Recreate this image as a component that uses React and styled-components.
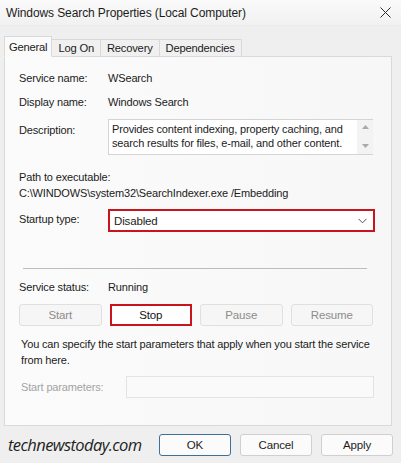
import React from 'react'
import styled, { createGlobalStyle } from 'styled-components'

const GlobalStyle = createGlobalStyle`
  html, body {
    margin: 0;
    padding: 0;
    background: #f0f0f0;
  }
  * { box-sizing: border-box; }
`

const Window = styled.div`
  width: 401px;
  height: 463px;
  background: #efefef;
  display: flex;
  flex-direction: column;
  font-family: "Liberation Sans", Arial, sans-serif;
  font-size: 11px;
  letter-spacing: -0.15px;
  color: #1b1b1b;
  overflow: hidden;
`

const TitleBar = styled.div`
  height: 26px;
  display: flex;
  align-items: center;
  justify-content: space-between;
  padding: 0 10px 0 6px;
  background: linear-gradient(#fafafa, #f1f1f1);
  border-bottom: 1px solid #ececec;
`

const Title = styled.span`
  font-size: 12px;
  letter-spacing: -0.1px;
  color: #1c1c1c;
`

const Body = styled.div`
  padding: 10px 9px 0 4px;
`

const TabRow = styled.div`
  display: flex;
  align-items: flex-end;
  height: 20px;
`

const TabItem = styled.div`
  height: ${p => (p.$active ? '21px' : '18px')};
  padding: 0 ${p => (p.$active ? 4 : 6)}px;
  display: flex;
  align-items: center;
  font-size: 11.2px;
  letter-spacing: -0.2px;
  background: ${p => (p.$active ? '#fafafa' : '#f0f0f0')};
  border: 1px solid #d9d9d9;
  border-bottom: ${p => (p.$active ? '1px solid #fafafa' : '1px solid #d9d9d9')};
  margin-right: -1px;
  margin-bottom: -1px;
  position: relative;
  z-index: ${p => (p.$active ? 2 : 1)};
`

const Panel = styled.div`
  height: 370px;
  border: 1px solid #d9d9d9;
  background: linear-gradient(90deg, #fbfbfb, #f7f7f7);
  padding: 14px 16px 0 14px;
  display: flex;
  flex-direction: column;
`

const InfoRow = styled.div`
  display: grid;
  grid-template-columns: 89px 1fr;
  align-items: ${p => (p.$top ? 'start' : 'center')};
  min-height: 14px;
  margin-top: ${p => p.$mt || 0}px;
  margin-bottom: ${p => p.$mb || 0}px;
`

const Label = styled.span`
  color: ${p => (p.$disabled ? '#a3a3a3' : '#1b1b1b')};
  padding-top: ${p => p.$pt || 0}px;
`

const DescBox = styled.div`
  height: 36px;
  margin-right: 2px;
  border: 1px solid #d4d4d4;
  border-right: none;
  background: #fff;
  display: flex;
  justify-content: space-between;
  padding: 2px 0 0 3px;
  line-height: 14px;
`

const ScrollCol = styled.div`
  width: 16px;
  background: #f3f3f3;
  display: flex;
  flex-direction: column;
  justify-content: space-between;
  align-items: center;
  padding: 5px 0 6px;
  margin-top: -2px;
`

const PathBlock = styled.div`
  margin-top: 14px;
  line-height: 16px;
`

const Select = styled.div`
  height: 23px;
  border: 2px solid #c8151d;
  background: #fff;
  display: flex;
  align-items: center;
  justify-content: space-between;
  padding: 0 6px 0 4px;
  font-size: 11.5px;
`

const Separator = styled.div`
  height: 1px;
  background: #bdbdbd;
  margin: 36px 8px 0 4px;
`

const ButtonRow = styled.div`
  display: grid;
  grid-template-columns: repeat(4, 1fr);
  gap: 8px;
  margin: 10px 2px 0 0;
`

const ActionButton = styled.div`
  height: 22px;
  display: flex;
  align-items: center;
  justify-content: center;
  font-size: 11.5px;
  background: ${p => (p.$on ? '#fff' : '#f6f6f6')};
  color: ${p => (p.$on ? '#111' : '#8c8c8c')};
  border: ${p => (p.$on ? '2px solid #c8151d' : '1px solid #e0e0e0')};
  border-radius: ${p => (p.$on ? '0' : '3px')};
`

const Note = styled.p`
  margin: 10px 0 0 2px;
  line-height: 16px;
`

const ParamRow = styled.div`
  display: grid;
  grid-template-columns: 105px 1fr;
  align-items: center;
  margin: 8px 0 0 2px;
`

const ParamInput = styled.div`
  height: 22px;
  border: 1px solid #e3e3e3;
  background: #fafafa;
  margin-right: 1px;
`

const Footer = styled.div`
  flex: 1;
  display: flex;
  align-items: center;
  padding: 0 8px 0 8px;
`

const Watermark = styled.span`
  font-family: "Open Sans", sans-serif;
  font-style: italic;
  font-weight: 500;
  font-size: 16.5px;
  letter-spacing: -0.6px;
  color: #1e1e1e;
  flex: 1;
`

const DialogButton = styled.div`
  width: 72px;
  height: 22px;
  margin-left: 9px;
  display: flex;
  align-items: center;
  justify-content: center;
  font-size: 11.5px;
  background: #fbfbfb;
  border: 1px solid ${p => (p.$primary ? '#3f6f95' : '#cfcfcf')};
  border-radius: 3px;
`

const Close = () => (
  <svg width="11" height="11" viewBox="0 0 11 11">
    <path d="M0.5 0.5 L10.5 10.5 M10.5 0.5 L0.5 10.5" stroke="#2a2a2a" strokeWidth="1" fill="none" />
  </svg>
)

const Chevron = () => (
  <svg width="9" height="6" viewBox="0 0 9 6">
    <path d="M0.5 0.8 L4.5 4.8 L8.5 0.8" stroke="#555" strokeWidth="1" fill="none" />
  </svg>
)

const Arrow = ({ up }) => (
  <svg width="7" height="4" viewBox="0 0 7 4">
    <path d={up ? 'M0 4 L3.5 0 L7 4 Z' : 'M0 0 L3.5 4 L7 0 Z'} fill="#a9a9a9" />
  </svg>
)

const tabs = [
  { name: 'General', active: true },
  { name: 'Log On' },
  { name: 'Recovery' },
  { name: 'Dependencies' },
]

export default function App() {
  return (
    <Window>
      <GlobalStyle />
      <TitleBar>
        <Title>Windows Search Properties (Local Computer)</Title>
        <Close />
      </TitleBar>
      <Body>
        <TabRow>
          {tabs.map(t => (
            <TabItem key={t.name} $active={t.active}>{t.name}</TabItem>
          ))}
        </TabRow>
        <Panel>
          <InfoRow $mb={10}>
            <Label>Service name:</Label>
            <span>WSearch</span>
          </InfoRow>
          <InfoRow $mb={10}>
            <Label>Display name:</Label>
            <span>Windows Search</span>
          </InfoRow>
          <InfoRow $top>
            <Label $pt={5}>Description:</Label>
            <DescBox>
              <span>
                Provides content indexing, property caching, and<br />
                search results for files, e-mail, and other content.
              </span>
              <ScrollCol>
                <Arrow up />
                <Arrow />
              </ScrollCol>
            </DescBox>
          </InfoRow>
          <PathBlock>
            Path to executable:<br />
            C:\WINDOWS\system32\SearchIndexer.exe /Embedding
          </PathBlock>
          <InfoRow $top $mt={8}>
            <Label $pt={4}>Startup type:</Label>
            <Select>
              <span>Disabled</span>
              <Chevron />
            </Select>
          </InfoRow>
          <Separator />
          <InfoRow $mt={11}>
            <Label>Service status:</Label>
            <span>Running</span>
          </InfoRow>
          <ButtonRow>
            <ActionButton>Start</ActionButton>
            <ActionButton $on>Stop</ActionButton>
            <ActionButton>Pause</ActionButton>
            <ActionButton>Resume</ActionButton>
          </ButtonRow>
          <Note>
            You can specify the start parameters that apply when you start the service<br />
            from here.
          </Note>
          <ParamRow>
            <Label $disabled>Start parameters:</Label>
            <ParamInput />
          </ParamRow>
        </Panel>
      </Body>
      <Footer>
        <Watermark>technewstoday.com</Watermark>
        <DialogButton $primary>OK</DialogButton>
        <DialogButton>Cancel</DialogButton>
        <DialogButton>Apply</DialogButton>
      </Footer>
    </Window>
  )
}
